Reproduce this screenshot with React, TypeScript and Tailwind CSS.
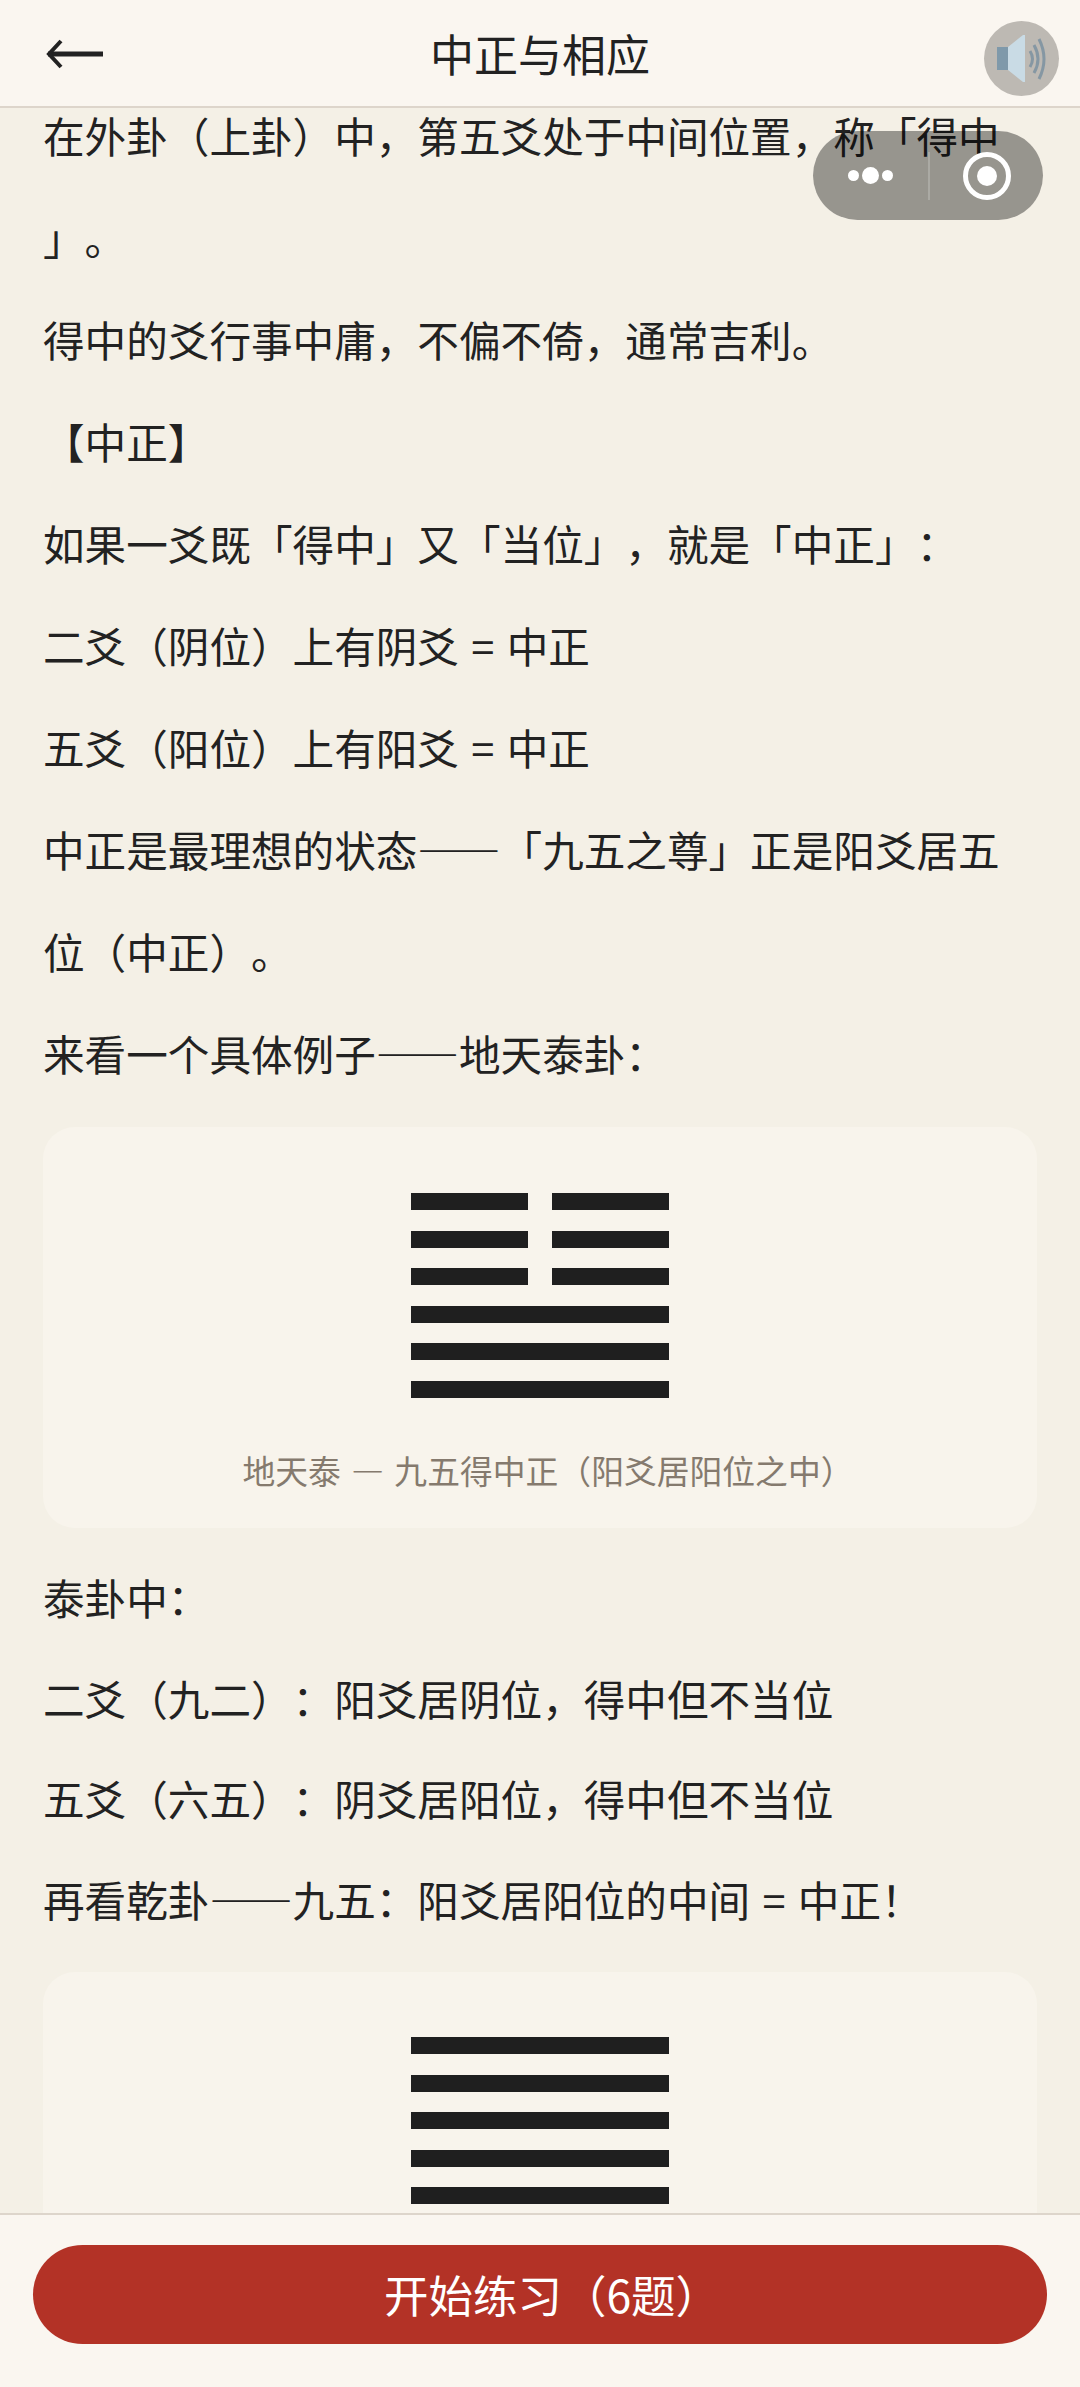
const FONT = "font-['Noto_Sans_CJK_SC','Noto_Sans',sans-serif]";

// 1 = solid line, 0 = broken line, top to bottom
function Hexagram({ lines }: { lines: number[] }) {
  return (
    <div className="flex flex-col gap-[20.6px] w-[258px] mx-auto">
      {lines.map((solid, i) =>
        solid ? (
          <div key={i} className="h-[17px] bg-[#1f1f1f]" />
        ) : (
          <div key={i} className="h-[17px] flex justify-between">
            <div className="w-[117px] bg-[#1f1f1f]" />
            <div className="w-[117px] bg-[#1f1f1f]" />
          </div>
        )
      )}
    </div>
  );
}

function P({ children }: { children: React.ReactNode }) {
  return <p className="whitespace-nowrap">{children}</p>;
}

export default function App() {
  return (
    <div lang="zh-CN" className={`relative flex flex-col w-[1080px] h-[2387px] overflow-hidden bg-[#f4f0e6] text-[#222222] [text-spacing-trim:space-all] [word-spacing:3px] ${FONT}`}>
      <header className="relative flex items-center justify-center h-[108px] shrink-0 bg-[#faf6f0] border-b-2 border-[#ddd5cb]">
        <svg className="absolute left-[46px] top-[39px]" width="58" height="30" viewBox="0 0 58 30" fill="none" stroke="#222222">
          <path d="M2 15H57" strokeWidth="5" />
          <path d="M15 2L3 15L15 28" strokeWidth="4" />
        </svg>
        <h1 className="text-[44px] font-normal">中正与相应</h1>
        <div className="absolute left-[984px] top-[21px] flex items-center justify-center w-[75px] h-[75px] rounded-full bg-[#bdb9b3]">
          <svg width="52" height="50" viewBox="0 0 52 50" fill="none">
            <rect x="1" y="13" width="11" height="23" fill="#7f99aa" />
            <path d="M12 13L27 1H29V48H27L12 36Z" fill="#c9dbe5" />
            <path d="M34 17Q39 25 34 33" stroke="#8597a3" strokeWidth="3" />
            <path d="M38 11Q46 25 38 39" stroke="#8597a3" strokeWidth="3" />
            <path d="M43 5Q53 25 43 45" stroke="#8597a3" strokeWidth="3" />
          </svg>
        </div>
      </header>

      <main className="flex-1 min-h-0 overflow-hidden px-[43px]">
        <div className="mt-[-24px] text-[41.6px] leading-[102px]">
          <P>
            在外卦（上卦）中，第五爻处于中间位置，称「得中
            <br />
            」。
          </P>
          <P>得中的爻行事中庸，不偏不倚，通常吉利。</P>
          <P>【中正】</P>
          <P>如果一爻既「得中」又「当位」，就是「中正」：</P>
          <P>二爻（阴位）上有阴爻 = 中正</P>
          <P>五爻（阳位）上有阳爻 = 中正</P>
          <P>中正是最理想的状态——「九五之尊」正是阳爻居五</P>
          <P>位（中正）。</P>
          <P>来看一个具体例子——地天泰卦：</P>

          <div className="mt-[23px] mb-[19px] w-[994px] h-[401px] pt-[66px] rounded-[32px] bg-[#f8f4ec]">
            <Hexagram lines={[0, 0, 0, 1, 1, 1]} />
            <p className="mt-[46px] pl-[16px] text-center text-[32.8px] leading-[52px] text-[#857a6e]">地天泰 — 九五得中正（阳爻居阳位之中）</p>
          </div>

          <div className="leading-[100.5px]">
            <P>泰卦中：</P>
            <P>二爻（九二）：阳爻居阴位，得中但不当位</P>
            <P>五爻（六五）：阴爻居阳位，得中但不当位</P>
            <P>再看乾卦——九五：阳爻居阳位的中间 = 中正！</P>
          </div>

          <div className="mt-[23px] w-[994px] h-[401px] pt-[65px] rounded-[32px] bg-[#f8f4ec]">
            <Hexagram lines={[1, 1, 1, 1, 1, 1]} />
          </div>
        </div>
      </main>

      <footer className="shrink-0 h-[174px] pt-[30px] px-[33px] bg-[#faf6f0] border-t-2 border-[#ddd5cb]">
        <button className="flex items-center justify-center w-[1014px] h-[99px] pl-[24px] rounded-full bg-[#b33226] text-[44.5px] text-white">
          开始练习（6题）
        </button>
      </footer>

      {/* mini program capsule sits over the scrolling text */}
      <div className="absolute left-[813px] top-[131px] flex items-center w-[230px] h-[89px] rounded-full bg-black/[0.38]">
        <div className="flex items-center justify-center gap-[3px] w-[115px]">
          <span className="w-[11px] h-[11px] rounded-full bg-white" />
          <span className="w-[17px] h-[17px] rounded-full bg-white" />
          <span className="w-[11px] h-[11px] rounded-full bg-white" />
        </div>
        <div className="w-[2px] h-[48px] bg-white/20" />
        <div className="flex items-center justify-center w-[113px]">
          <span className="flex items-center justify-center w-[48px] h-[48px] rounded-full border-[5px] border-white">
            <span className="w-[20px] h-[20px] rounded-full bg-white" />
          </span>
        </div>
      </div>
    </div>
  );
}
